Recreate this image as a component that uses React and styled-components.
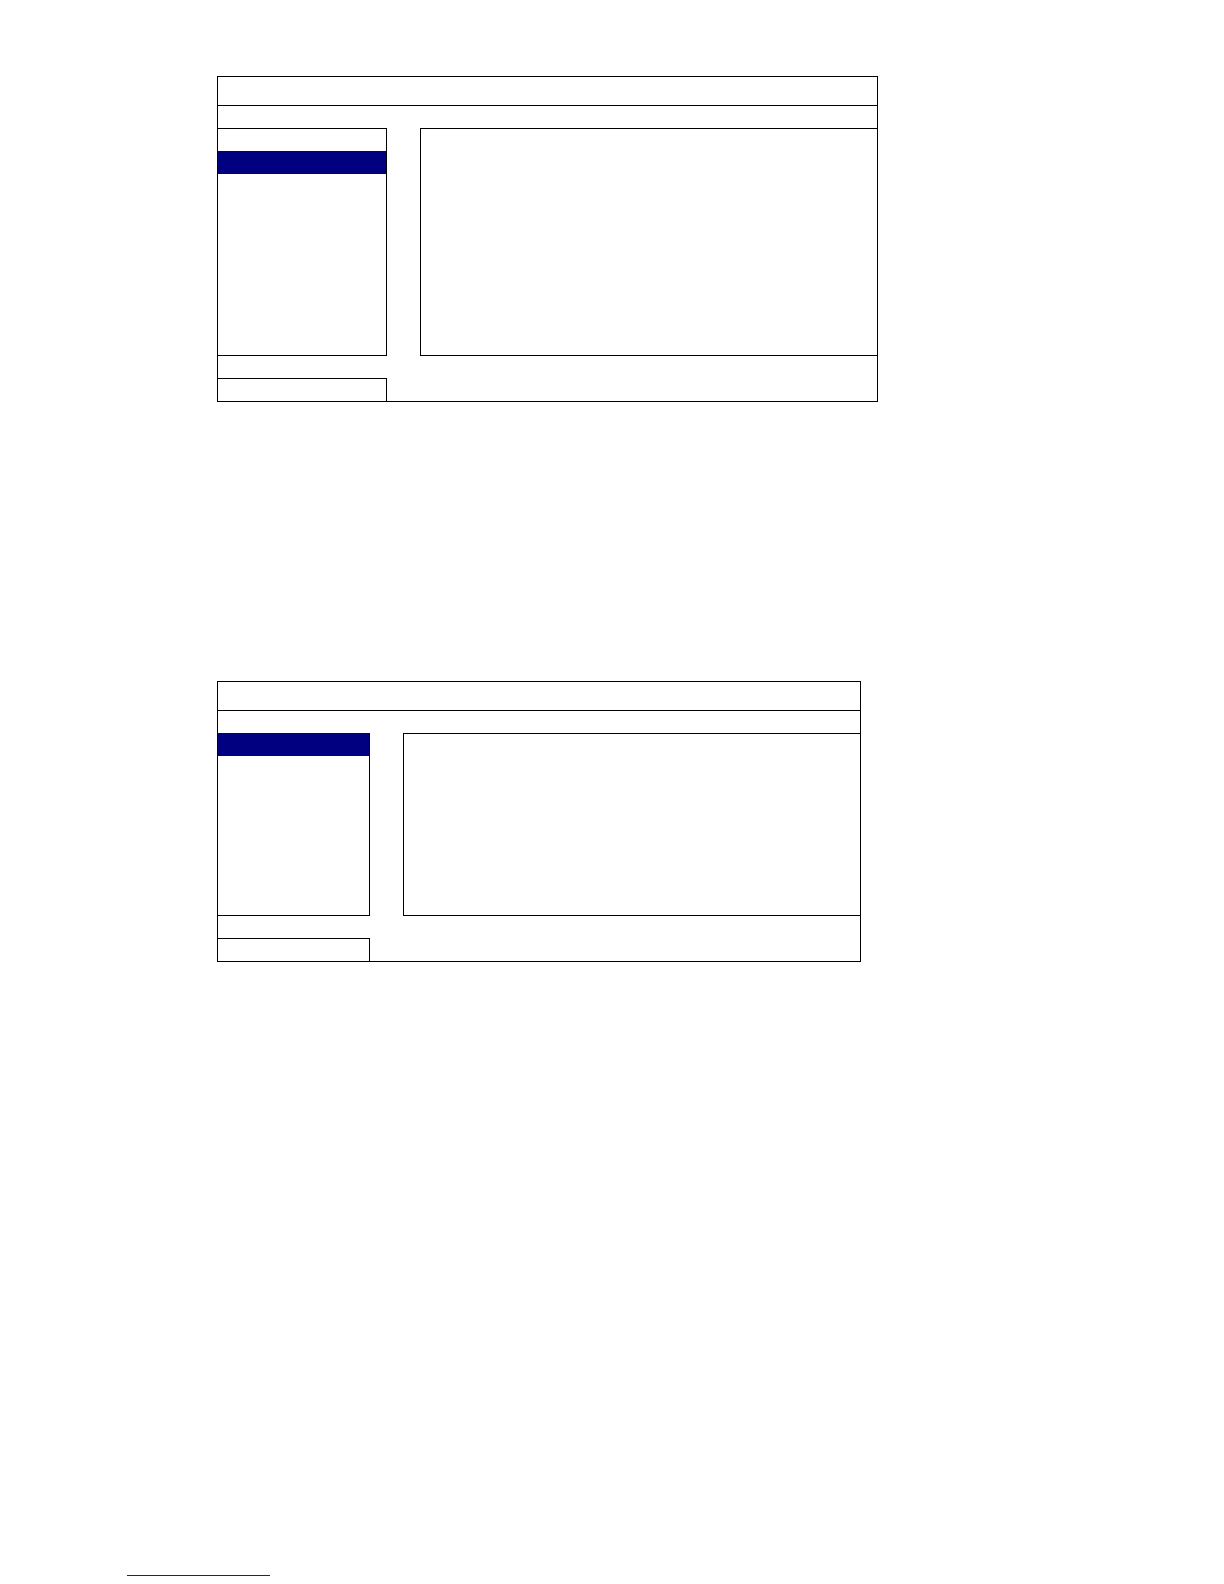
import React from "react";
import styled, { createGlobalStyle } from "styled-components";

const GlobalStyle = createGlobalStyle`
	html, body {
		margin: 0;
		padding: 0;
		background: #ffffff;
		font-family: "Liberation Sans", Arial, sans-serif;
	}
`;

const Page = styled.div`
	width: 1224px;
	min-height: 1584px;
	padding-top: 76px;
	box-sizing: border-box;
	display: flex;
	flex-direction: column;
`;

const Frame = styled.div`
	width: ${props => props.width}px;
	margin-left: 217px;
	margin-top: ${props => props.top || 0}px;
	border: 1px solid #000000;
	box-sizing: border-box;
	display: flex;
	flex-direction: column;
`;

const TitleBar = styled.div`
	height: 28px;
	border-bottom: 1px solid #000000;
`;

const Spacer = styled.div`
	height: 22px;
`;

const Panels = styled.div`
	display: flex;
	align-items: stretch;
	height: ${props => props.height}px;
	column-gap: 33px;
`;

const MenuList = styled.ul`
	width: ${props => props.width}px;
	margin: 0;
	padding: 0;
	list-style: none;
	border-top: 1px solid #000000;
	border-right: 1px solid #000000;
	border-bottom: 1px solid #000000;
	box-sizing: border-box;
	flex: 0 0 auto;
`;

const MenuItem = styled.li`
	height: ${props => props.active ? 23 : 22}px;
	margin-top: ${props => props.active && props.first ? -1 : 0}px;
	background: ${props => props.active ? "#000080" : "transparent"};
`;

const ContentPanel = styled.div`
	flex: 1 1 auto;
	border-top: 1px solid #000000;
	border-left: 1px solid #000000;
	border-bottom: 1px solid #000000;
	box-sizing: border-box;
`;

const StatusCell = styled.div`
	width: ${props => props.width}px;
	height: 23px;
	border-top: 1px solid #000000;
	border-right: 1px solid #000000;
	box-sizing: border-box;
`;

const LinkLine = styled.div`
	width: 143px;
	height: 1px;
	margin-left: 127px;
	margin-top: ${props => props.top}px;
	background: #1a1a9c;
`;

const MenuFrame = ({width, top, panelHeight, listWidth, rows, selected}) => {
	return (
		<Frame width={width} top={top}>
			<TitleBar/>
			<Spacer/>
			<Panels height={panelHeight}>
				<MenuList width={listWidth}>
					{Array.from({length: rows}).map((_, i) => (
						<MenuItem key={i} active={i === selected} first={i === 0}/>
					))}
				</MenuList>
				<ContentPanel/>
			</Panels>
			<Spacer/>
			<StatusCell width={listWidth}/>
		</Frame>
	);
};

const App = () => {
	return (
		<Page>
			<GlobalStyle/>
			<MenuFrame width={661} panelHeight={228} listWidth={169} rows={8} selected={1}/>
			<MenuFrame width={644} top={279} panelHeight={183} listWidth={152} rows={6} selected={0}/>
			<LinkLine top={613}/>
		</Page>
	);
};

export default App;
